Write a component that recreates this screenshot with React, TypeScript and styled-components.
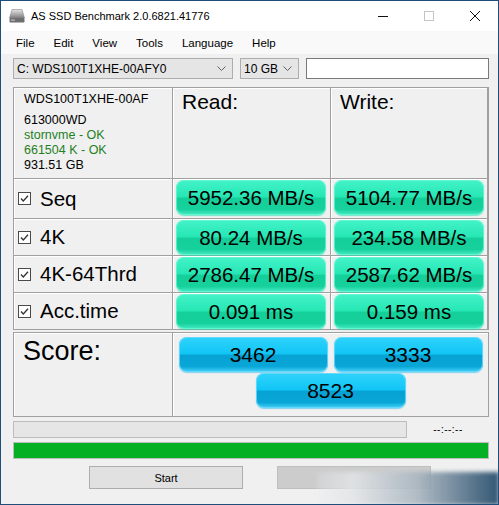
import React from 'react'
import styled, { createGlobalStyle } from 'styled-components'

const GlobalStyle = createGlobalStyle`
html, body {
    margin: 0;
    padding: 0;
    background: #ffffff;
}
* {
    box-sizing: border-box;
}
`

const Window = styled.div`
width: 499px;
height: 505px;
border: 1px solid #1e4e79;
background: #f0f0f0;
display: flex;
flex-direction: column;
position: relative;
overflow: hidden;
font-family: "Liberation Sans", Arial, sans-serif;
color: #000;
`

const TitleBar = styled.div`
height: 30px;
background: #ffffff;
display: flex;
align-items: center;
flex-shrink: 0;
>span{
    margin-left: 6px;
    font-size: 11px;
    flex: 1;
}
`

const AppIcon = styled.svg`
margin-left: 8px;
`

const Caption = styled.div<{ $dim?: boolean }>`
width: 46px;
height: 30px;
display: flex;
align-items: center;
justify-content: center;
color: ${p => (p.$dim ? '#c4c4c4' : '#111')};
`

const MenuBar = styled.div`
height: 23px;
background: #f9f9f9;
display: flex;
align-items: center;
gap: 19px;
padding-left: 15px;
font-size: 11.5px;
flex-shrink: 0;
`

const Body = styled.div`
padding: 4px 9px 0 12px;
display: flex;
flex-direction: column;
`

const Toolbar = styled.div`
display: flex;
gap: 7px;
height: 21px;
`

const Combo = styled.div<{ $w: number }>`
width: ${p => p.$w}px;
height: 21px;
border: 1px solid #adadad;
background: #e5e5e5;
display: flex;
align-items: center;
justify-content: space-between;
padding: 0 6px 0 3px;
font-size: 12px;
`

const TextBox = styled.div`
flex: 1;
height: 21px;
border: 1px solid #7a7a7a;
background: #ffffff;
`

const ResultGrid = styled.div`
margin-top: 8px;
display: grid;
grid-template-columns: 158px 157px 156px;
grid-template-rows: 90px 39px 36px 36px 36px;
gap: 1px;
padding: 1px;
background: #a0a0a0;
`

const Cell = styled.div`
background: #f0f0f0;
box-shadow: inset 1px 1px 0 #ffffff;
`

const InfoCell = styled(Cell)`
padding: 4px 0 0 10px;
font-size: 12.5px;
line-height: 15px;
>div:first-child{
    margin-bottom: 6px;
}
`

const Good = styled.div`
color: #1f801f;
`

const HeadCell = styled(Cell)`
padding: 2px 0 0 9px;
font-size: 21px;
line-height: 24px;
`

const LabelCell = styled(Cell)`
display: flex;
align-items: center;
gap: 9px;
padding-left: 4px;
font-size: 20.5px;
`

const BarCell = styled(Cell)`
padding: 1px 0 0 3px;
`

const Bar = styled.div<{ $blue?: boolean; $w?: number }>`
width: ${p => p.$w ?? 150}px;
height: 35px;
border-radius: 8px;
display: flex;
align-items: center;
justify-content: center;
font-size: 20.5px;
padding-top: 1px;
background: ${p =>
    p.$blue
        ? 'linear-gradient(to bottom, #2fd3fb 0%, #12c6f6 47%, #07a2d3 53%, #08a6d7 84%, #45d2f8 100%)'
        : 'linear-gradient(to bottom, #44f3c9 0%, #27e7b5 47%, #15cf9a 53%, #16d19c 84%, #49ecc6 100%)'};
box-shadow: ${p =>
    p.$blue
        ? 'inset 0 0 0 1px rgba(110, 220, 255, 0.8), 0 1px 1px rgba(60, 190, 240, 0.6)'
        : 'inset 0 0 0 1px rgba(110, 250, 215, 0.7), 0 1px 1px rgba(40, 220, 170, 0.6)'};
`

const ScoreBox = styled.div`
margin-top: 2px;
display: grid;
grid-template-columns: 158px 1fr;
grid-template-rows: 83px;
gap: 1px;
padding: 1px;
background: #a0a0a0;
`

const ScoreLabel = styled(Cell)`
padding: 2px 0 0 9px;
font-size: 27px;
line-height: 32px;
`

const ScoreBars = styled(Cell)`
display: flex;
flex-wrap: wrap;
justify-content: center;
align-content: flex-start;
gap: 1px 6px;
padding-top: 4px;
>div{
    font-size: 21px;
}
`

const ProgressRow = styled.div`
margin-top: 4px;
display: flex;
align-items: center;
>span{
    flex: 1;
    text-align: center;
    font-size: 10px;
    letter-spacing: 0.5px;
}
`

const Progress = styled.div<{ $w: number; $fill?: boolean }>`
width: ${p => p.$w}px;
height: 17px;
border: 1px solid #bcbcbc;
background: ${p => (p.$fill ? '#06b025' : '#e6e6e6')};
`

const ButtonRow = styled.div`
margin-top: 7px;
display: flex;
gap: 34px;
padding-left: 76px;
`

const Button = styled.div<{ $disabled?: boolean }>`
width: 154px;
height: 23px;
border: 1px solid ${p => (p.$disabled ? '#bfbfbf' : '#adadad')};
background: ${p => (p.$disabled ? '#cccccc' : '#e1e1e1')};
display: flex;
align-items: center;
justify-content: center;
font-size: 11px;
`

const Smudge = styled.div`
position: absolute;
right: -1px;
bottom: -1px;
width: 182px;
height: 33px;
background: linear-gradient(to right, rgba(240, 240, 240, 0.2) 0%, rgba(225, 228, 230, 0.85) 20%, rgba(170, 182, 192, 0.9) 55%, rgba(40, 78, 108, 0.95) 100%);
filter: blur(2px);
`

const Chevron = () => (
    <svg width="9" height="5" viewBox="0 0 9 5">
        <path d="M0.5 0.5 L4.5 4.5 L8.5 0.5" fill="none" stroke="#606060" strokeWidth="1" />
    </svg>
)

const Check = () => (
    <svg width="13" height="13" viewBox="0 0 13 13">
        <rect x="0.5" y="0.5" width="12" height="12" fill="#ffffff" stroke="#4a4a4a" />
        <path d="M3 6.5 L5.3 9 L10 3.8" fill="none" stroke="#333" strokeWidth="1.3" />
    </svg>
)

const rows = [
    { name: 'Seq', read: '5952.36 MB/s', write: '5104.77 MB/s' },
    { name: '4K', read: '80.24 MB/s', write: '234.58 MB/s' },
    { name: '4K-64Thrd', read: '2786.47 MB/s', write: '2587.62 MB/s' },
    { name: 'Acc.time', read: '0.091 ms', write: '0.159 ms' },
]

export default function App() {
    return (
        <>
            <GlobalStyle />
            <Window>
                <TitleBar>
                    <AppIcon width="16" height="14" viewBox="0 0 16 14">
                        <defs>
                            <linearGradient id="drv" x1="0" y1="0" x2="0" y2="1">
                                <stop offset="0" stopColor="#e4e4e4" />
                                <stop offset="0.6" stopColor="#a8a8a8" />
                                <stop offset="1" stopColor="#7c7c7c" />
                            </linearGradient>
                        </defs>
                        <path d="M3 0.5 H13 L15.5 9 H0.5 Z" fill="url(#drv)" stroke="#8a8a8a" strokeWidth="0.6" />
                        <rect x="0.5" y="9" width="15" height="4.5" rx="0.8" fill="#6e6e6e" />
                        <rect x="2" y="10.5" width="4" height="1.2" fill="#bdbdbd" />
                    </AppIcon>
                    <span>AS SSD Benchmark 2.0.6821.41776</span>
                    <Caption>
                        <svg width="10" height="10" viewBox="0 0 10 10">
                            <path d="M0 5.5 H10" stroke="#111" strokeWidth="1" />
                        </svg>
                    </Caption>
                    <Caption $dim>
                        <svg width="10" height="10" viewBox="0 0 10 10">
                            <rect x="0.5" y="0.5" width="9" height="9" fill="none" stroke="#c4c4c4" />
                        </svg>
                    </Caption>
                    <Caption>
                        <svg width="10" height="10" viewBox="0 0 10 10">
                            <path d="M0 0 L10 10 M10 0 L0 10" stroke="#111" strokeWidth="1" />
                        </svg>
                    </Caption>
                </TitleBar>
                <MenuBar>
                    <span>File</span>
                    <span>Edit</span>
                    <span>View</span>
                    <span>Tools</span>
                    <span>Language</span>
                    <span>Help</span>
                </MenuBar>
                <Body>
                    <Toolbar>
                        <Combo $w={220}>
                            <span>C: WDS100T1XHE-00AFY0</span>
                            <Chevron />
                        </Combo>
                        <Combo $w={59}>
                            <span>10 GB</span>
                            <Chevron />
                        </Combo>
                        <TextBox />
                    </Toolbar>
                    <ResultGrid>
                        <InfoCell>
                            <div>WDS100T1XHE-00AF</div>
                            <div>613000WD</div>
                            <Good>stornvme - OK</Good>
                            <Good>661504 K - OK</Good>
                            <div>931.51 GB</div>
                        </InfoCell>
                        <HeadCell>Read:</HeadCell>
                        <HeadCell>Write:</HeadCell>
                        {rows.map(r => (
                            <React.Fragment key={r.name}>
                                <LabelCell>
                                    <Check />
                                    <span>{r.name}</span>
                                </LabelCell>
                                <BarCell>
                                    <Bar>{r.read}</Bar>
                                </BarCell>
                                <BarCell>
                                    <Bar>{r.write}</Bar>
                                </BarCell>
                            </React.Fragment>
                        ))}
                    </ResultGrid>
                    <ScoreBox>
                        <ScoreLabel>Score:</ScoreLabel>
                        <ScoreBars>
                            <Bar $blue $w={149}>3462</Bar>
                            <Bar $blue $w={149}>3333</Bar>
                            <Bar $blue $w={150}>8523</Bar>
                        </ScoreBars>
                    </ScoreBox>
                    <ProgressRow>
                        <Progress $w={394} />
                        <span>--:--:--</span>
                    </ProgressRow>
                    <ProgressRow>
                        <Progress $w={476} $fill />
                    </ProgressRow>
                    <ButtonRow>
                        <Button>Start</Button>
                        <Button $disabled />
                    </ButtonRow>
                </Body>
                <Smudge />
            </Window>
        </>
    )
}
